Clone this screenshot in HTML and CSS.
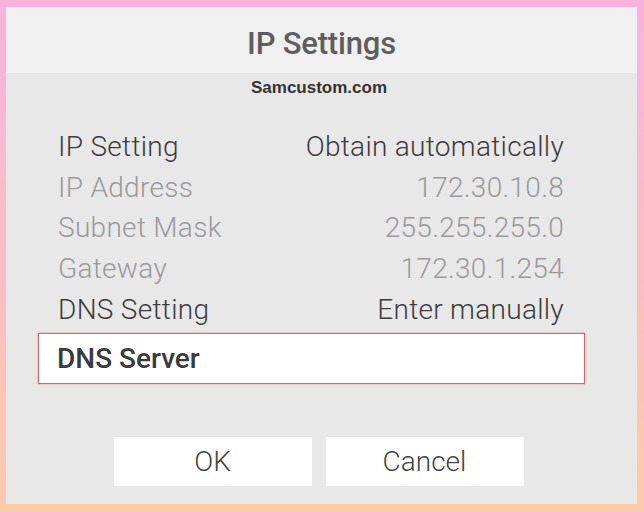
FILE: index.html
```html
<!DOCTYPE html>
<html lang="en">
<head>
<meta charset="UTF-8">
<meta name="viewport" content="width=device-width, initial-scale=1.0">
<title>IP Settings</title>
<link rel="stylesheet" href="styles.css">
</head>
<body>

<div class="frame">
    <div class="dialog">
        <div class="dialog-header">
            <h2 class="dialog-title">IP Settings</h2>
        </div>
        <div class="dialog-body">
            <div class="watermark">Samcustom.com</div>

            <div class="settings">
                <div class="row">
                    <span class="label">IP Setting</span>
                    <span class="value">Obtain automatically</span>
                </div>
                <div class="row row-disabled">
                    <span class="label">IP Address</span>
                    <span class="value">172.30.10.8</span>
                </div>
                <div class="row row-disabled">
                    <span class="label">Subnet Mask</span>
                    <span class="value">255.255.255.0</span>
                </div>
                <div class="row row-disabled">
                    <span class="label">Gateway</span>
                    <span class="value">172.30.1.254</span>
                </div>
                <div class="row">
                    <span class="label">DNS Setting</span>
                    <span class="value">Enter manually</span>
                </div>
            </div>

            <div class="focus-field">DNS Server</div>

            <div class="buttons">
                <button class="btn" type="button">OK</button>
                <button class="btn" type="button">Cancel</button>
            </div>
        </div>
    </div>
</div>

</body>
</html>
```

FILE: styles.css
```css
body {
    margin: 0;
    font-family: Roboto, "Noto Sans", sans-serif;
    background: linear-gradient(to bottom, #f8b2de 0%, #fbbcc4 50%, #fdcbaa 100%);
    height: 512px;
    overflow: hidden;
}
.frame {
    padding: 7px 7px 8px 6px;
    height: 512px;
    box-sizing: border-box;
}
.dialog {
    height: 100%;
    background-color: #e8e8e8;
    display: flex;
    flex-direction: column;
}
.dialog-header {
    background-color: #f0f0f0;
    height: 66px;
    display: flex;
    align-items: center;
    justify-content: center;
}
.dialog-title {
    margin: 0;
    padding-top: 6px;
    font-size: 31px;
    font-weight: 500;
    color: #5e5e5e;
    letter-spacing: -0.2px;
}
.dialog-body {
    flex: 1;
    display: flex;
    flex-direction: column;
}
.watermark {
    font-family: "Liberation Sans", Arial, sans-serif;
    font-weight: bold;
    font-size: 17px;
    color: #333333;
    text-align: center;
    margin-top: 5px;
    padding-right: 5px;
}
.settings {
    margin-top: 28px;
    padding: 0 73px 0 52px;
}
.row {
    display: flex;
    justify-content: space-between;
    height: 40.7px;
    align-items: center;
    font-size: 28px;
    font-weight: 300;
    color: #3c3c3c;
    letter-spacing: 0.3px;
}
.row-disabled {
    color: #9a9a9a;
}
.focus-field {
    margin: 4px 52px 0 32px;
    height: 51px;
    box-sizing: border-box;
    background-color: #ffffff;
    border: 1px solid #e0616c;
    box-shadow: 0 0 2px rgba(224, 97, 108, 0.6);
    display: flex;
    align-items: center;
    padding-left: 18px;
    font-size: 28px;
    font-weight: 500;
    color: #3a3a3a;
    letter-spacing: 0;
}
.buttons {
    margin-top: 53px;
    display: flex;
    justify-content: center;
    gap: 14px;
    padding-right: 6px;
}
.btn {
    width: 198px;
    height: 49px;
    background-color: #ffffff;
    border: none;
    border-radius: 0;
    font-family: Roboto, "Noto Sans", sans-serif;
    font-size: 28px;
    font-weight: 300;
    color: #444444;
    padding: 0;
    cursor: pointer;
}
```
